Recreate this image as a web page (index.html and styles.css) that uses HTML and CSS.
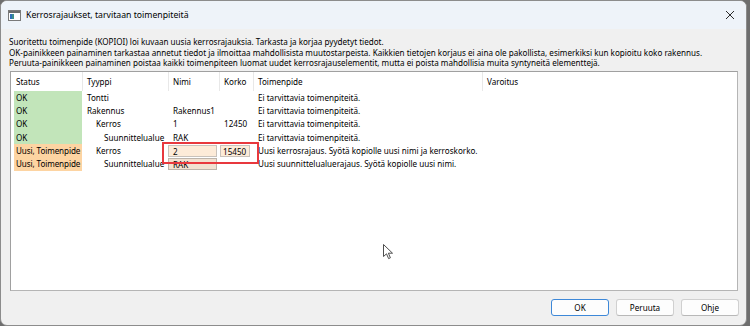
FILE: index.html
```html
<!DOCTYPE html>
<html lang="fi">
<head>
    <meta charset="UTF-8">
    <title>Kerrosrajaukset, tarvitaan toimenpiteitä</title>
    <link rel="stylesheet" href="styles.css">
</head>
<body>
    <div class="window">
        <div class="titlebar">
            <svg class="app-icon" width="13" height="11" viewBox="0 0 13 11">
                <rect x="0.5" y="0.5" width="12" height="10" fill="#ffffff" stroke="#7a7a7a"/>
                <rect x="1" y="1" width="11" height="2" fill="#6d6d6d"/>
                <rect x="2" y="4" width="4" height="5" fill="#3f8f8a"/>
                <rect x="2" y="4" width="2" height="5" fill="#2f6fb8"/>
            </svg>
            <span class="title">Kerrosrajaukset, tarvitaan toimenpiteitä</span>
            <svg class="close" width="10" height="10" viewBox="0 0 10 10">
                <path d="M1 1 L9 9 M9 1 L1 9" stroke="#2b2b2b" stroke-width="1"/>
            </svg>
        </div>

        <div class="message">
            <p>Suoritettu toimenpide (KOPIOI) loi kuvaan uusia kerrosrajauksia. Tarkasta ja korjaa pyydetyt tiedot.</p>
            <p>OK-painikkeen painaminen tarkastaa annetut tiedot ja ilmoittaa mahdollisista muutostarpeista. Kaikkien tietojen korjaus ei aina ole pakollista, esimerkiksi kun kopioitu koko rakennus.</p>
            <p>Peruuta-painikkeen painaminen poistaa kaikki toimenpiteen luomat uudet kerrosrajauselementit, mutta ei poista mahdollisia muita syntyneitä elementtejä.</p>
        </div>

        <div class="grid-box">
            <div class="row head">
                <div class="cell first">Status</div>
                <div class="cell">Tyyppi</div>
                <div class="cell">Nimi</div>
                <div class="cell">Korko</div>
                <div class="cell">Toimenpide</div>
                <div class="cell">Varoitus</div>
            </div>

            <div class="row">
                <div class="cell status ok">OK</div>
                <div class="cell">Tontti</div>
                <div class="cell"></div>
                <div class="cell"></div>
                <div class="cell">Ei tarvittavia toimenpiteitä.</div>
                <div class="cell"></div>
            </div>
            <div class="row">
                <div class="cell status ok">OK</div>
                <div class="cell">Rakennus</div>
                <div class="cell">Rakennus1</div>
                <div class="cell"></div>
                <div class="cell">Ei tarvittavia toimenpiteitä.</div>
                <div class="cell"></div>
            </div>
            <div class="row">
                <div class="cell status ok">OK</div>
                <div class="cell level-1">Kerros</div>
                <div class="cell">1</div>
                <div class="cell">12450</div>
                <div class="cell">Ei tarvittavia toimenpiteitä.</div>
                <div class="cell"></div>
            </div>
            <div class="row">
                <div class="cell status ok">OK</div>
                <div class="cell level-2">Suunnittelualue</div>
                <div class="cell">RAK</div>
                <div class="cell"></div>
                <div class="cell">Ei tarvittavia toimenpiteitä.</div>
                <div class="cell"></div>
            </div>
            <div class="row">
                <div class="cell status new">Uusi, Toimenpide</div>
                <div class="cell level-1">Kerros</div>
                <div class="cell"><span class="edit name">2</span></div>
                <div class="cell"><span class="edit height">15450</span></div>
                <div class="cell">Uusi kerrosrajaus. Syötä kopiolle uusi nimi ja kerroskorko.</div>
                <div class="cell"></div>
            </div>
            <div class="row">
                <div class="cell status new">Uusi, Toimenpide</div>
                <div class="cell level-2">Suunnittelualue</div>
                <div class="cell"><span class="edit name dim">RAK</span></div>
                <div class="cell"></div>
                <div class="cell">Uusi suunnittelualuerajaus. Syötä kopiolle uusi nimi.</div>
                <div class="cell"></div>
            </div>

            <!-- red marking drawn over the edited cells -->
            <div class="highlight"></div>

            <svg class="cursor" width="11" height="16" viewBox="0 0 11 16">
                <path d="M0.5 0.5 L0.5 12.5 L3.5 9.8 L5.6 14.6 L7.4 13.8 L5.4 9.2 L9.5 9.2 Z" fill="#ffffff" stroke="#3a3a3a" stroke-width="0.9"/>
            </svg>
        </div>

        <div class="buttons">
            <button class="btn default">OK</button>
            <button class="btn">Peruuta</button>
            <button class="btn">Ohje</button>
        </div>
    </div>
</body>
</html>
```

FILE: styles.css
```css
body {
    margin: 0;
    background-color: #6e6e6e;
    font-family: 'Noto Sans', 'Open Sans', sans-serif;
    font-size: 8.1px;
    color: #000;
}

.window {
    width: 745px;
    height: 324px;
    background-color: #f0f0f0;
    border: 1px solid #8c8c8c;
    border-radius: 7px;
    overflow: hidden;
}

.titlebar {
    height: 28px;
    display: flex;
    align-items: center;
    padding: 0 9px 0 7px;
    background-color: #eef3f9;
}

.app-icon {
    margin-right: 5px;
    margin-top: 1px;
}

.title {
    font-size: 8.7px;
    flex: 1;
}

.close {
    margin-right: 2px;
}

.message {
    padding: 8px 8px 2px;
}

.message p {
    margin: 0;
    line-height: 10.5px;
    white-space: nowrap;
}

.grid-box {
    position: relative;
    margin-left: 9px;
    width: 728px;
    height: 220px;
    padding-left: 3px;
    box-sizing: border-box;
    background: #fff;
    border: 1px solid #a0a0a0;
    border-right-color: #b5b5b5;
    border-bottom-color: #b5b5b5;
}

.row {
    display: grid;
    grid-template-columns: 68px 86px 51px 34px 229px 256px;
    height: 13.4px;
    line-height: 13.4px;
    white-space: nowrap;
}

.row.head {
    height: 19px;
    line-height: 19px;
}

.cell {
    padding-left: 5px;
    overflow: hidden;
}

.head .cell {
    border-left: 1px solid #e8e8e8;
    padding-left: 4px;
}

.head .cell.first {
    border-left: none;
    padding-left: 2px;
}

.status {
    padding-left: 2px;
    letter-spacing: -0.1px;
}

.status.ok {
    background-color: #c2e5ba;
}

.status.new {
    background-color: #fdd4a2;
}

.level-1 {
    padding-left: 14px;
}

.level-2 {
    padding-left: 22px;
}

.cell:has(.edit) {
    padding-left: 0;
    overflow: visible;
}

.edit {
    display: block;
    box-sizing: border-box;
    height: 12px;
    margin-top: 1px;
    line-height: 11px;
    padding-left: 4px;
    background-color: #fdebd8;
    border: 1px solid #c9c2bb;
}

.edit.name {
    width: 49px;
}

.edit.height {
    width: 30px;
    margin-left: 1px;
    padding-left: 2px;
}

.edit.dim {
    background-color: #f1e1d1;
    border-color: #bdb4aa;
}

.highlight {
    position: absolute;
    left: 151px;
    top: 70px;
    width: 93px;
    height: 18px;
    border: 2px solid #e8383d;
}

.cursor {
    position: absolute;
    left: 372px;
    top: 172px;
}

.buttons {
    display: flex;
    justify-content: flex-end;
    gap: 7px;
    padding: 8px 7px 0 0;
}

.btn {
    width: 58px;
    height: 17px;
    padding: 0;
    font-family: inherit;
    font-size: 8.1px;
    color: #000;
    background-color: #fdfdfd;
    border: 1px solid #d0d0d0;
    border-bottom-color: #b8b8b8;
    border-radius: 3px;
}

.btn.default {
    border-color: #3d88d8;
}
```
